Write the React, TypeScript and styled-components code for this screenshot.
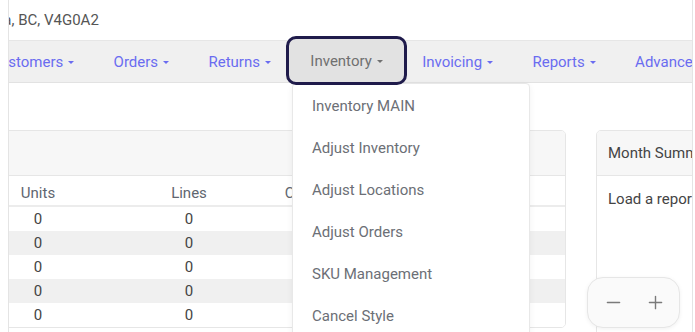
import { createGlobalStyle, styled } from "styled-components";
import { Minus, Plus } from "lucide-react";

const GlobalStyle = createGlobalStyle`
  html, body {
    margin: 0;
    padding: 0;
    background: #fff;
  }
  body {
    font-family: Roboto, "Liberation Sans", Arial, sans-serif;
    font-size: 15px;
    color: #555;
  }
`;

const navItems = ["Customers", "Orders", "Returns", "Inventory", "Invoicing", "Reports", "Advanced"];
const menuItems = ["Inventory MAIN", "Adjust Inventory", "Adjust Locations", "Adjust Orders", "SKU Management", "Cancel Style"];
const rows = [0, 1, 2, 3, 4];

const App = () => {
  return (
    <>
      <GlobalStyle />
      <Page>
        <Frame>
          <Scroller>
            <Address>Delta, BC, V4G0A2</Address>
            <Nav>
              {navItems.map((item) => (
                <NavItem key={item} $active={item === "Inventory"}>
                  {item}
                  <Caret />
                </NavItem>
              ))}
            </Nav>
            <Content>
              <Card $width={597}>
                <CardHeader />
                <Table>
                  <HeadRow>
                    <Cell>Units</Cell>
                    <Cell>Lines</Cell>
                    <Cell>Cartons</Cell>
                    <Cell>Weight</Cell>
                    <Cell>Total</Cell>
                  </HeadRow>
                  {rows.map((r) => (
                    <Row key={r} $striped={r % 2 === 1}>
                      <Cell>0</Cell>
                      <Cell>0</Cell>
                      <Cell>0</Cell>
                      <Cell>0</Cell>
                      <Cell>0</Cell>
                    </Row>
                  ))}
                </Table>
              </Card>
              <Card $width={320} $tall>
                <CardHeader>Month Summary</CardHeader>
                <CardBody>Load a report to see the summary.</CardBody>
              </Card>
            </Content>
          </Scroller>
        </Frame>

        {/* open menu of the active nav item */}
        <Dropdown>
          {menuItems.map((item) => (
            <MenuItem key={item}>{item}</MenuItem>
          ))}
        </Dropdown>

        <ZoomControl>
          <ZoomButton>
            <Minus size={21} strokeWidth={1.6} />
          </ZoomButton>
          <ZoomButton>
            <Plus size={21} strokeWidth={1.6} />
          </ZoomButton>
        </ZoomControl>
      </Page>
    </>
  );
};

export default App;

const Page = styled.div`
  position: relative;
  width: 695px;
  height: 332px;
  overflow: hidden;
  background: #fff;
`;

const Frame = styled.div`
  box-sizing: border-box;
  margin-left: 8px;
  width: 685px;
  height: 100%;
  border-left: 1px solid #e4e4e4;
  border-right: 1px solid #e4e4e4;
  overflow: hidden;
`;

const Scroller = styled.div`
  display: flex;
  flex-direction: column;
  margin-left: -40px;
  width: 1200px;
`;

const Address = styled.div`
  display: flex;
  align-items: center;
  height: 40px;
  padding-left: 8px;

  color: #555;
  font-size: 15px;
`;

const Nav = styled.div`
  display: flex;
  align-items: center;
  height: 41px;
  padding-left: 1.5px;

  background: #f0f0f0;
  border-top: 1px solid #e6e6e6;
  border-bottom: 1px solid #e2e2e2;
`;

const NavItem = styled.div<{ $active?: boolean }>`
  position: relative;
  z-index: 2;
  display: flex;
  align-items: center;
  flex-shrink: 0;
  box-sizing: border-box;
  padding: ${(p) => (p.$active ? "0 21.7px" : "0 19.7px")};
  height: ${(p) => (p.$active ? "49px" : "41px")};
  margin: ${(p) => (p.$active ? "0 -5px 2px" : "0")};

  border: ${(p) => (p.$active ? "3px solid #1f1b4b" : "none")};
  border-radius: 10px;
  background: ${(p) => (p.$active ? "#e2e2e2" : "transparent")};

  color: ${(p) => (p.$active ? "#707070" : "#6a6cf0")};
  font-size: 15px;
  white-space: nowrap;
`;

const Caret = styled.span`
  display: inline-block;
  margin-left: 5px;
  margin-top: 1px;
  width: 0;
  height: 0;

  border-top: 3.5px solid currentColor;
  border-left: 3.5px solid transparent;
  border-right: 3.5px solid transparent;
`;

const Content = styled.div`
  display: flex;
  align-items: flex-start;
  gap: 30px;
  padding-top: 47px;
`;

const Card = styled.div<{ $width: number; $tall?: boolean }>`
  display: flex;
  flex-direction: column;
  flex-shrink: 0;
  box-sizing: border-box;
  width: ${(p) => p.$width}px;
  min-height: ${(p) => (p.$tall ? "260px" : "0")};

  border: 1px solid #e6e6e6;
  border-radius: 5px;
  background: #fff;
  overflow: hidden;
`;

const CardHeader = styled.div`
  display: flex;
  align-items: center;
  height: 44px;
  padding: 0 11px;

  background: #f7f7f7;
  border-bottom: 1px solid #e6e6e6;

  color: #444;
  font-size: 15px;
  white-space: nowrap;
`;

const CardBody = styled.div`
  padding: 12px 11px;

  color: #444;
  font-size: 15px;
  line-height: 22px;
  white-space: nowrap;
`;

const Table = styled.div`
  display: flex;
  flex-direction: column;
`;

const HeadRow = styled.div`
  display: grid;
  grid-template-columns: 136px 166px 78px 110px 1fr;
  align-items: center;
  height: 24px;
  padding-top: 5px;

  border-bottom: 2px solid #ececec;
  color: #5f6670;
`;

const Row = styled.div<{ $striped?: boolean }>`
  display: grid;
  grid-template-columns: 136px 166px 78px 110px 1fr;
  align-items: center;
  height: 24px;

  background: ${(p) => (p.$striped ? "#f0f0f0" : "#fff")};
  color: #444;
`;

const Cell = styled.div`
  text-align: center;
  font-size: 15px;
  white-space: nowrap;
`;

const Dropdown = styled.div`
  position: absolute;
  z-index: 1;
  left: 292px;
  top: 83px;
  box-sizing: border-box;
  width: 238px;

  background: #fff;
  border: 1px solid #e8e8e8;
  border-radius: 4px;
  box-shadow: 0 2px 6px rgba(0, 0, 0, 0.06);
`;

const MenuItem = styled.div`
  display: flex;
  align-items: center;
  height: 42px;
  padding: 0 19px;

  color: #6c6f76;
  font-size: 15px;
  white-space: nowrap;

  &:first-child {
    height: 43px;
  }
`;

const ZoomControl = styled.div`
  position: absolute;
  z-index: 3;
  left: 587px;
  top: 277px;
  box-sizing: border-box;
  display: flex;
  align-items: center;
  gap: 21px;
  width: 93px;
  height: 51px;
  padding-left: 15px;

  background: #fafafa;
  border: 1px solid #e6e6e6;
  border-radius: 16px;
  box-shadow: 0 1px 4px rgba(0, 0, 0, 0.06);
`;

const ZoomButton = styled.div`
  display: flex;
  align-items: center;
  justify-content: center;
  width: 21px;
  height: 21px;

  color: #7a7a7a;
`;
